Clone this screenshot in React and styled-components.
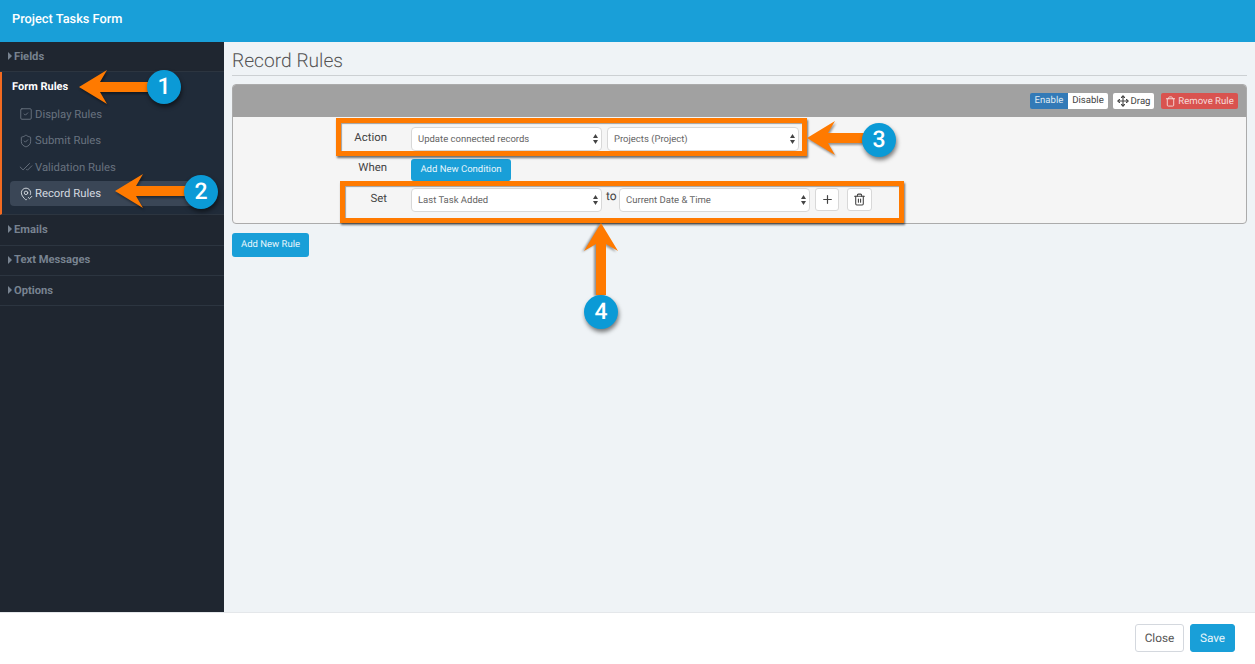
import React from 'react';
import styled, { createGlobalStyle } from 'styled-components';
import { SquareCheck, ShieldCheck, CheckCheck, MapPinCheck, Trash, Trash2, Plus, Move } from 'lucide-react';

const GlobalStyle = createGlobalStyle`
    html, body {
        margin: 0;
        padding: 0;
        height: 100%;
    }
    body {
        font-family: Roboto, "Liberation Sans", sans-serif;
        text-rendering: geometricPrecision;
        overflow: hidden;
    }
    * {
        box-sizing: border-box;
    }
`

const sections = ['Emails', 'Text Messages', 'Options'];

const subRules = [
    { label: 'Display Rules', Icon: SquareCheck },
    { label: 'Submit Rules', Icon: ShieldCheck },
    { label: 'Validation Rules', Icon: CheckCheck },
    { label: 'Record Rules', Icon: MapPinCheck, active: true },
];

function SelectArrows() {
    return (
        <svg width="5" height="10" viewBox="0 0 5 10">
            <path d="M2.5 0 L5 4 H0 Z M2.5 10 L0 6 H5 Z" fill="#444" />
        </svg>
    )
}

function Select({ width, children }) {
    return (
        <SelectBox $width={width}>
            <SelectText>{children}</SelectText>
            <SelectArrows />
        </SelectBox>
    )
}

// horizontal arrow pointing left, the vertical one is the same drawing turned
function Arrow({ x, y, length, up }) {
    return (
        <ArrowSvg $x={x} $y={y} $up={up} width={length} height="36" viewBox={`0 0 ${length} 36`}>
            <path
                d={`M0 18 L28 1 L21 13 H${length} V23 H21 L28 35 Z`}
                fill="#ff7a00"
            />
        </ArrowSvg>
    )
}

function App() {
    return (
        <Page>
            <GlobalStyle />
            <Header>Project Tasks Form</Header>
            <Middle>
                <Sidebar>
                    <Section><Caret />Fields</Section>
                    <ActiveGroup>
                        <GroupTitle>Form Rules</GroupTitle>
                        {subRules.map(({ label, Icon, active }) => (
                            <SubItem key={label} $active={active}>
                                <Icon size={14} strokeWidth={1.6} />
                                {label}
                            </SubItem>
                        ))}
                    </ActiveGroup>
                    {sections.map((name) => (
                        <Section key={name}><Caret />{name}</Section>
                    ))}
                </Sidebar>
                <Content>
                    <Title>Record Rules</Title>
                    <RuleCard>
                        <RuleHeader>
                            <ToggleGroup>
                                <ToggleOn>Enable</ToggleOn>
                                <ToggleOff>Disable</ToggleOff>
                            </ToggleGroup>
                            <DragButton><Move size={12} strokeWidth={2.2} />Drag</DragButton>
                            <RemoveButton><Trash size={11} />Remove Rule</RemoveButton>
                        </RuleHeader>
                        <RuleBody>
                            <RuleRow>
                                <RuleLabel>Action</RuleLabel>
                                <Select width={191}>Update connected records</Select>
                                <Select width={192}>Projects (Project)</Select>
                            </RuleRow>
                            <RuleRow>
                                <RuleLabel $top={1}>When</RuleLabel>
                                <BlueButton>Add New Condition</BlueButton>
                            </RuleRow>
                            <RuleRow>
                                <RuleLabel>Set</RuleLabel>
                                <Select width={191}>Last Task Added</Select>
                                <ToText>to</ToText>
                                <Select width={191}>Current Date &amp; Time</Select>
                                <IconButton><Plus size={13} strokeWidth={2.2} /></IconButton>
                                <IconButton $wide><Trash2 size={13} /></IconButton>
                            </RuleRow>
                        </RuleBody>
                    </RuleCard>
                    <AddRule>Add New Rule</AddRule>
                </Content>
            </Middle>
            <Footer>
                <CloseButton>Close</CloseButton>
                <SaveButton>Save</SaveButton>
            </Footer>

            <Highlight $x={336} $y={118} $w={471} $h={38} />
            <Highlight $x={340} $y={181} $w={564} $h={42} />
            <Arrow x={79} y={69} length={72} />
            <Arrow x={115} y={173} length={75} />
            <Arrow x={807} y={120} length={60} />
            <Arrow x={569} y={223} length={72} up />
            <Badge $x={164} $y={87}>1</Badge>
            <Badge $x={201} $y={192}>2</Badge>
            <Badge $x={879} $y={140}>3</Badge>
            <Badge $x={601} $y={312}>4</Badge>
        </Page>
    )
}

export default App

const Page = styled.div`
    position: relative;
    width: 1255px;
    height: 664px;
    display: flex;
    flex-direction: column;
    overflow: hidden;
    background: #fff;
`

const Header = styled.div`
    height: 42px;
    flex-shrink: 0;
    background: #199fd8;
    color: #fff;
    font-size: 12.8px;
    font-weight: 500;
    padding: 0 12px;
    line-height: 40px;
`

const Middle = styled.div`
    flex: 1;
    display: flex;
    min-height: 0;
`

const Sidebar = styled.div`
    width: 224px;
    flex-shrink: 0;
    background: #1f2630;
`

const Section = styled.div`
    height: 30.3px;
    padding: 0 0 1px 8px;
    display: flex;
    align-items: center;
    gap: 2px;
    color: #788390;
    font-size: 11.2px;
    font-weight: 700;
    border-bottom: 1px solid #2c3540;
`

const Caret = styled.span`
    width: 0;
    height: 0;
    border-left: 4px solid #788390;
    border-top: 4px solid transparent;
    border-bottom: 4px solid transparent;
`

const ActiveGroup = styled.div`
    height: 143px;
    background: #202b39;
    border-left: 2px solid #f26a21;
    border-bottom: 1px solid #2c3540;
    padding: 0 0 0 8px;
`

const GroupTitle = styled.div`
    height: 29.5px;
    line-height: 29px;
    padding-left: 2px;
    color: #fff;
    font-size: 11px;
    font-weight: 700;
`

const SubItem = styled.div`
    height: 25px;
    margin: 0 29px ${(p) => (p.$active ? '0' : '1.5px')} 0;
    padding-left: 9px;
    display: flex;
    align-items: center;
    gap: 2px;
    border-radius: 4px;
    font-size: 11.3px;
    color: ${(p) => (p.$active ? '#d5dae0' : '#68727f')};
    background: ${(p) => (p.$active ? '#3a4656' : 'transparent')};
`

const Content = styled.div`
    flex: 1;
    min-width: 0;
    background: #eff3f6;
    padding: 0 8px;
`

const Title = styled.div`
    height: 34px;
    margin-bottom: 8px;
    border-bottom: 1px solid #ccd0d3;
    color: #555;
    font-size: 19.2px;
    font-weight: 300;
    line-height: 37px;
`

const RuleCard = styled.div`
    height: 140px;
    background: #f5f5f5;
    border: 1px solid #ababab;
    border-radius: 4px;
    overflow: hidden;
`

const RuleHeader = styled.div`
    height: 32px;
    background: #a1a1a1;
    display: flex;
    align-items: center;
    justify-content: flex-end;
    padding-right: 8px;
    font-size: 9.6px;
`

const ToggleGroup = styled.div`
    display: flex;
    margin-right: 5px;
`

const ToggleOn = styled.div`
    height: 16px;
    width: 38px;
    line-height: 16px;
    text-align: center;
    background: #337ab7;
    color: #dfe9f2;
    border-radius: 2px 0 0 2px;
`

const ToggleOff = styled(ToggleOn)`
    width: 40px;
    background: #fff;
    color: #444;
    border-radius: 0 2px 2px 0;
`

const DragButton = styled.div`
    height: 16px;
    width: 41px;
    margin-right: 7px;
    display: flex;
    align-items: center;
    justify-content: center;
    gap: 2px;
    background: #fff;
    color: #444;
    border-radius: 2px;
`

const RemoveButton = styled(DragButton)`
    width: 77px;
    margin-right: 0;
    background: #d9534f;
    color: #f6dbda;
`

const RuleBody = styled.div`
    padding-top: 10px;
`

const RuleRow = styled.div`
    display: flex;
    align-items: flex-start;
    margin-bottom: 7.5px;
    min-height: 22px;
`

const RuleLabel = styled.div`
    width: 154px;
    margin-right: 24px;
    padding-top: ${(p) => p.$top ?? 3}px;
    text-align: right;
    color: #444;
    font-size: 11.4px;
`

const SelectBox = styled.div`
    width: ${(p) => p.$width}px;
    height: 24px;
    margin-right: 5px;
    padding: 0 3px 0 6px;
    display: flex;
    align-items: center;
    justify-content: space-between;
    background: #fff;
    border: 1px solid #d8d8d8;
    border-radius: 4px;
    color: #666;
    font-size: 9.5px;
`

const SelectText = styled.span`
    padding-top: 1px;
`

const ToText = styled.div`
    width: 13px;
    margin-left: -1px;
    padding-top: 1px;
    color: #444;
    font-size: 12px;
`

const IconButton = styled.div`
    width: ${(p) => (p.$wide ? 25 : 24)}px;
    height: 23px;
    margin-right: ${(p) => (p.$wide ? 0 : 8)}px;
    display: flex;
    align-items: center;
    justify-content: center;
    background: #fff;
    border: 1px solid #d8d8d8;
    border-radius: 3px;
    color: #444;
`

const BlueButton = styled.div`
    width: 100px;
    height: 22px;
    line-height: 22px;
    text-align: center;
    background: #199fd8;
    color: #e6f5fb;
    border-radius: 3px;
    font-size: 9.5px;
`

const AddRule = styled(BlueButton)`
    width: 77px;
    height: 24px;
    line-height: 23px;
    margin-top: 9px;
`

const Footer = styled.div`
    height: 52px;
    flex-shrink: 0;
    display: flex;
    align-items: center;
    justify-content: flex-end;
    gap: 6px;
    padding: 0 20px 1px 0;
    background: #fff;
    border-top: 1px solid #e4e7ea;
`

const CloseButton = styled.div`
    width: 49px;
    height: 28px;
    line-height: 26px;
    text-align: center;
    background: #fff;
    border: 1px solid #d4d8de;
    border-radius: 3px;
    color: #555;
    font-size: 11.8px;
`

const SaveButton = styled(CloseButton)`
    width: 45px;
    background: #199fd8;
    border-color: #199fd8;
    color: #e6f5fb;
`

// annotations painted over the screenshot
const Highlight = styled.div`
    position: absolute;
    left: ${(p) => p.$x}px;
    top: ${(p) => p.$y}px;
    width: ${(p) => p.$w}px;
    height: ${(p) => p.$h}px;
    border: 5px solid #ff7a00;
    box-shadow: 1px 2px 2px rgba(0, 0, 0, 0.55), inset 1px 1px 1px rgba(0, 0, 0, 0.35);
`

const ArrowSvg = styled.svg`
    position: absolute;
    left: ${(p) => p.$x}px;
    top: ${(p) => p.$y}px;
    filter: drop-shadow(1px 2px 1px rgba(0, 0, 0, 0.4));
    transform-origin: 0 18px;
    ${(p) => p.$up && 'transform: translate(32px, -18px) rotate(90deg);'}
`

const Badge = styled.div`
    position: absolute;
    left: ${(p) => p.$x - 17}px;
    top: ${(p) => p.$y - 17}px;
    width: 34px;
    height: 34px;
    line-height: 34px;
    text-align: center;
    border-radius: 50%;
    background: #0b9ad6;
    color: #fff;
    font-size: 23px;
    font-weight: 500;
    box-shadow: 1px 3px 4px rgba(0, 0, 0, 0.5);
`
